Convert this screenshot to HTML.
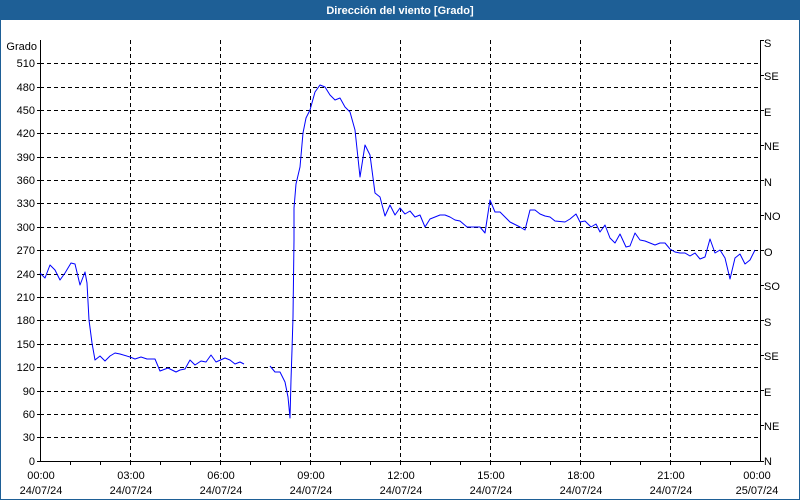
<!DOCTYPE html>
<html><head><meta charset="utf-8"><style>
html,body{margin:0;padding:0;background:#fff}
svg{display:block;font-family:"Liberation Sans",sans-serif;font-size:11px}
</style></head><body>
<svg width="800" height="500" viewBox="0 0 800 500" xmlns="http://www.w3.org/2000/svg">
<rect x="0" y="0" width="800" height="500" fill="#fff"/>
<rect x="0.5" y="0.5" width="799" height="499" fill="none" stroke="#1e5f96"/>
<rect x="0" y="0" width="800" height="20" fill="#1e5f96"/>
<text x="400" y="14" fill="#fff" font-weight="bold" text-anchor="middle">Dirección del viento [Grado]</text>
<g stroke="#000" stroke-dasharray="4,3" stroke-width="1">
<line x1="40" x2="760" y1="63.5" y2="63.5"/><line x1="40" x2="760" y1="87.5" y2="87.5"/><line x1="40" x2="760" y1="110.5" y2="110.5"/><line x1="40" x2="760" y1="133.5" y2="133.5"/><line x1="40" x2="760" y1="157.5" y2="157.5"/><line x1="40" x2="760" y1="180.5" y2="180.5"/><line x1="40" x2="760" y1="203.5" y2="203.5"/><line x1="40" x2="760" y1="227.5" y2="227.5"/><line x1="40" x2="760" y1="250.5" y2="250.5"/><line x1="40" x2="760" y1="274.5" y2="274.5"/><line x1="40" x2="760" y1="297.5" y2="297.5"/><line x1="40" x2="760" y1="320.5" y2="320.5"/><line x1="40" x2="760" y1="344.5" y2="344.5"/><line x1="40" x2="760" y1="367.5" y2="367.5"/><line x1="40" x2="760" y1="391.5" y2="391.5"/><line x1="40" x2="760" y1="414.5" y2="414.5"/><line x1="40" x2="760" y1="437.5" y2="437.5"/>
<line x1="130.5" x2="130.5" y1="40" y2="461"/><line x1="220.5" x2="220.5" y1="40" y2="461"/><line x1="310.5" x2="310.5" y1="40" y2="461"/><line x1="400.5" x2="400.5" y1="40" y2="461"/><line x1="490.5" x2="490.5" y1="40" y2="461"/><line x1="580.5" x2="580.5" y1="40" y2="461"/><line x1="670.5" x2="670.5" y1="40" y2="461"/>
</g>
<g stroke="#000" stroke-width="1" fill="none">
<path d="M40.5 40V461.5H760.5V40"/>
<path d="M37 63.5h4M37 87.5h4M37 110.5h4M37 133.5h4M37 157.5h4M37 180.5h4M37 203.5h4M37 227.5h4M37 250.5h4M37 274.5h4M37 297.5h4M37 320.5h4M37 344.5h4M37 367.5h4M37 391.5h4M37 414.5h4M37 437.5h4M37 461.5h4"/>
<path d="M760 40.5h4M760 75.5h4M760 110.5h4M760 145.5h4M760 180.5h4M760 215.5h4M760 250.5h4M760 285.5h4M760 320.5h4M760 355.5h4M760 390.5h4M760 425.5h4M760 461.5h4"/>
<path d="M70.5 461v4M100.5 461v4M130.5 461v4M160.5 461v4M190.5 461v4M220.5 461v4M250.5 461v4M280.5 461v4M310.5 461v4M340.5 461v4M370.5 461v4M400.5 461v4M430.5 461v4M460.5 461v4M490.5 461v4M520.5 461v4M550.5 461v4M580.5 461v4M610.5 461v4M640.5 461v4M670.5 461v4M700.5 461v4M730.5 461v4"/>
</g>
<g fill="#000" text-anchor="end">
<text x="37" y="50">Grado</text>
<text x="35" y="67">510</text><text x="35" y="91">480</text><text x="35" y="114">450</text><text x="35" y="137">420</text><text x="35" y="161">390</text><text x="35" y="184">360</text><text x="35" y="207">330</text><text x="35" y="231">300</text><text x="35" y="254">270</text><text x="35" y="278">240</text><text x="35" y="301">210</text><text x="35" y="324">180</text><text x="35" y="348">150</text><text x="35" y="371">120</text><text x="35" y="395">90</text><text x="35" y="418">60</text><text x="35" y="441">30</text><text x="35" y="465">0</text>
</g>
<g fill="#000">
<text x="764" y="47">S</text><text x="764" y="80">SE</text><text x="764" y="116">E</text><text x="764" y="150">NE</text><text x="764" y="186">N</text><text x="764" y="220">NO</text><text x="764" y="256">O</text><text x="764" y="290">SO</text><text x="764" y="326">S</text><text x="764" y="360">SE</text><text x="764" y="396">E</text><text x="764" y="430">NE</text><text x="764" y="465">N</text>
</g>
<g fill="#000" text-anchor="middle">
<text x="41" y="479">00:00</text><text x="41" y="494">24/07/24</text>
<text x="131" y="479">03:00</text><text x="131" y="494">24/07/24</text>
<text x="221" y="479">06:00</text><text x="221" y="494">24/07/24</text>
<text x="311" y="479">09:00</text><text x="311" y="494">24/07/24</text>
<text x="401" y="479">12:00</text><text x="401" y="494">24/07/24</text>
<text x="491" y="479">15:00</text><text x="491" y="494">24/07/24</text>
<text x="581" y="479">18:00</text><text x="581" y="494">24/07/24</text>
<text x="671" y="479">21:00</text><text x="671" y="494">24/07/24</text>
<text x="757" y="479">00:00</text><text x="757" y="494">25/07/24</text>
</g>
<g fill="none" stroke="#0000ff" stroke-width="1" stroke-linejoin="round">
<polyline points="40,273 45,278 50,265 55,270 60,280 65,273 71,263 75,264 80,285 85,272 87,283 89,320 92,343 95,360 100,356 105,361 110,356 115,353 120,354 130,357 135,359 141,357 147,359 155,359 160,371 168,368 176,372 180,370 185,369 190,360 195,365 201,361 206,362 211,355 216,362 225,358 230,360 235,364 240,362 244,364"/>
<polyline points="270,366 275,372 280,372 285,382 288,397 290,418 291,380 292,350 293,317 294,240 294,208 296,184 300,167 303,133 306,118 310,110 315,92 320,85 325,87 330,95 335,100 340,98 345,107 350,112 355,130 360,177 365,145 370,155 375,193 380,197 385,216 390,205 395,215 400,208 405,214 410,211 415,217 420,215 425,227 430,219 440,215 445,215 450,217 455,220 460,221 467,227 480,227 485,233 490,200 495,212 500,212 505,217 510,222 520,227 525,230 530,210 535,210 540,214 545,216 550,217 555,221 565,222 570,219 576,214 580,222 585,221 591,227 596,224 600,232 605,225 610,238 615,243 620,234 626,247 630,246 635,233 640,240 645,241 655,245 660,243 665,243 670,249 675,252 680,253 685,253 690,256 695,253 700,259 705,257 710,239 715,253 720,250 725,258 730,279 735,258 740,254 745,264 750,260 755,250"/>
</g>
</svg>
</body></html>
